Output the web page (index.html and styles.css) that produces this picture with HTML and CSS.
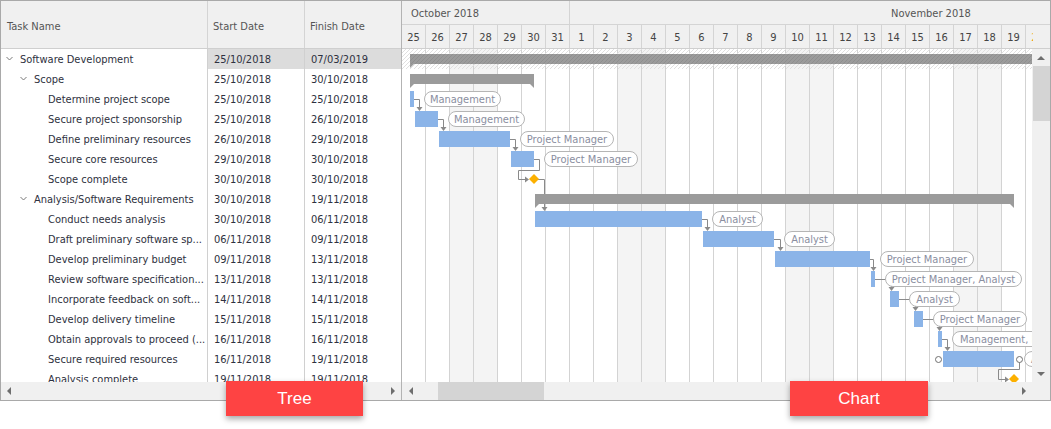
FILE: index.html
```html
<!DOCTYPE html>
<html lang="en">
<head>
  <meta charset="UTF-8">
  <meta name="viewport" content="width=device-width, initial-scale=1.0">
  <title>Gantt</title>
  <link rel="stylesheet" href="styles.css">
</head>
<body>
  <div class="page">
    <div class="gantt">
      <section class="tree">
        <div class="tree-head">
          <div class="th">Task Name</div>
          <div class="th">Start Date</div>
          <div class="th">Finish Date</div>
        </div>
        <div class="tree-body">
          <div class="row focused">
            <div class="cell name lv0"><svg class="chev" width="14" height="6" viewBox="0 0 14 6"><path d="M0.5 1L3.5 4L6.5 1"/></svg>Software Development</div>
            <div class="cell">25/10/2018</div>
            <div class="cell">07/03/2019</div>
          </div>
          <div class="row">
            <div class="cell name lv1"><svg class="chev" width="14" height="6" viewBox="0 0 14 6"><path d="M0.5 1L3.5 4L6.5 1"/></svg>Scope</div>
            <div class="cell">25/10/2018</div>
            <div class="cell">30/10/2018</div>
          </div>
          <div class="row">
            <div class="cell name lv2">Determine project scope</div>
            <div class="cell">25/10/2018</div>
            <div class="cell">25/10/2018</div>
          </div>
          <div class="row">
            <div class="cell name lv2">Secure project sponsorship</div>
            <div class="cell">25/10/2018</div>
            <div class="cell">26/10/2018</div>
          </div>
          <div class="row">
            <div class="cell name lv2">Define preliminary resources</div>
            <div class="cell">26/10/2018</div>
            <div class="cell">29/10/2018</div>
          </div>
          <div class="row">
            <div class="cell name lv2">Secure core resources</div>
            <div class="cell">29/10/2018</div>
            <div class="cell">30/10/2018</div>
          </div>
          <div class="row">
            <div class="cell name lv2">Scope complete</div>
            <div class="cell">30/10/2018</div>
            <div class="cell">30/10/2018</div>
          </div>
          <div class="row">
            <div class="cell name lv1"><svg class="chev" width="14" height="6" viewBox="0 0 14 6"><path d="M0.5 1L3.5 4L6.5 1"/></svg>Analysis/Software Requirements</div>
            <div class="cell">30/10/2018</div>
            <div class="cell">19/11/2018</div>
          </div>
          <div class="row">
            <div class="cell name lv2">Conduct needs analysis</div>
            <div class="cell">30/10/2018</div>
            <div class="cell">06/11/2018</div>
          </div>
          <div class="row">
            <div class="cell name lv2">Draft preliminary software sp...</div>
            <div class="cell">06/11/2018</div>
            <div class="cell">09/11/2018</div>
          </div>
          <div class="row">
            <div class="cell name lv2">Develop preliminary budget</div>
            <div class="cell">09/11/2018</div>
            <div class="cell">13/11/2018</div>
          </div>
          <div class="row">
            <div class="cell name lv2">Review software specification...</div>
            <div class="cell">13/11/2018</div>
            <div class="cell">13/11/2018</div>
          </div>
          <div class="row">
            <div class="cell name lv2">Incorporate feedback on soft...</div>
            <div class="cell">14/11/2018</div>
            <div class="cell">14/11/2018</div>
          </div>
          <div class="row">
            <div class="cell name lv2">Develop delivery timeline</div>
            <div class="cell">15/11/2018</div>
            <div class="cell">15/11/2018</div>
          </div>
          <div class="row">
            <div class="cell name lv2">Obtain approvals to proceed (...</div>
            <div class="cell">16/11/2018</div>
            <div class="cell">16/11/2018</div>
          </div>
          <div class="row">
            <div class="cell name lv2">Secure required resources</div>
            <div class="cell">16/11/2018</div>
            <div class="cell">19/11/2018</div>
          </div>
          <div class="row">
            <div class="cell name lv2">Analysis complete</div>
            <div class="cell">19/11/2018</div>
            <div class="cell">19/11/2018</div>
          </div>
        </div>
        <div class="hscroll tree-scroll">
          <span class="arr left"></span>
          <span class="arr right"></span>
        </div>
      </section>

      <section class="chart">
        <div class="chart-head">
          <div class="months">
            <div class="month oct">October 2018</div>
            <div class="month nov">November 2018</div>
          </div>
          <div class="days">
            <div class="day">25</div><div class="day">26</div><div class="day">27</div><div class="day">28</div>
            <div class="day">29</div><div class="day">30</div><div class="day">31</div>
            <div class="day">1</div><div class="day">2</div><div class="day">3</div><div class="day">4</div>
            <div class="day">5</div><div class="day">6</div><div class="day">7</div><div class="day">8</div>
            <div class="day">9</div><div class="day">10</div><div class="day">11</div><div class="day">12</div>
            <div class="day">13</div><div class="day">14</div><div class="day">15</div><div class="day">16</div>
            <div class="day">17</div><div class="day">18</div><div class="day">19</div><div class="day today">20</div>
          </div>
        </div>

        <div class="chart-main">
          <svg class="canvas" width="630" height="333" viewBox="0 0 630 333">
            <defs>
              <pattern id="grid" width="24" height="20" patternUnits="userSpaceOnUse">
                <rect x="23" width="1" height="20" fill="#d3d3d3"/>
              </pattern>
              <pattern id="hatch" width="4" height="4" patternUnits="userSpaceOnUse">
                <path d="M-1 1L1 -1M0 4L4 0M3 5L5 3" stroke="#e0e0e0"/>
              </pattern>
              <pattern id="hatch-dark" width="4" height="4" patternUnits="userSpaceOnUse">
                <path d="M-1 1L1 -1M0 4L4 0M3 5L5 3" stroke="#8f8f8f"/>
              </pattern>
            </defs>

            <!-- weekends -->
            <g fill="#f4f4f4">
              <rect x="47" width="48" height="333"/>
              <rect x="215" width="48" height="333"/>
              <rect x="383" width="48" height="333"/>
              <rect x="551" width="48" height="333"/>
            </g>
            <rect width="630" height="333" fill="url(#grid)"/>
            <rect width="630" height="20" fill="url(#hatch)"/>

            <!-- dependencies -->
            <g class="links">
              <path d="M12 50.5H17.5V58"/>
              <path d="M36 70.5H41.5V78"/>
              <path d="M108 90.5H113.5V98"/>
              <path d="M132 110.5H137.5V121.5H116.5V130.5H123"/>
              <path d="M136 130.5H142.5V158"/>
              <path d="M300 170.5H305.5V178"/>
              <path d="M372 190.5H378.5V198"/>
              <path d="M468 210.5H471.5V218"/>
              <path d="M473 230.5H489.5V238"/>
              <path d="M497 250.5H513.5V258"/>
              <path d="M521 270.5H537.5V278"/>
              <path d="M540 290.5H545.5V298"/>
              <path d="M617.5 313V320.5H596.5V330.5H603"/>
            </g>
            <g class="heads">
              <polygon points="14.5,58 20.5,58 17.5,62"/>
              <polygon points="38.5,78 44.5,78 41.5,82"/>
              <polygon points="110.5,98 116.5,98 113.5,102"/>
              <polygon points="123,127.5 123,133.5 127,130.5"/>
              <polygon points="139.5,158 145.5,158 142.5,162"/>
              <polygon points="302.5,178 308.5,178 305.5,182"/>
              <polygon points="375.5,198 381.5,198 378.5,202"/>
              <polygon points="468.5,218 474.5,218 471.5,222"/>
              <polygon points="486.5,238 492.5,238 489.5,242"/>
              <polygon points="510.5,258 516.5,258 513.5,262"/>
              <polygon points="534.5,278 540.5,278 537.5,282"/>
              <polygon points="542.5,298 548.5,298 545.5,302"/>
              <polygon points="603,327.5 603,333.5 607,330.5"/>
            </g>

            <!-- summaries -->
            <g fill="#9b9b9b">
              <rect x="8" y="5" width="622" height="10"/>
              <polygon points="8,15 12,15 8,19"/>
              <rect x="8" y="25" width="124" height="10"/>
              <polygon points="8,35 12,35 8,39"/>
              <polygon points="132,35 128,35 132,39"/>
              <rect x="133" y="145" width="479" height="10"/>
              <polygon points="133,155 137,155 133,159"/>
              <polygon points="612,155 608,155 612,159"/>
            </g>
            <rect x="8" y="5" width="622" height="10" fill="url(#hatch-dark)"/>

            <!-- tasks -->
            <g fill="#8bb4e8">
              <rect x="8" y="42" width="4" height="16"/>
              <rect x="13" y="62" width="23" height="16"/>
              <rect x="37" y="82" width="71" height="16"/>
              <rect x="109" y="102" width="23" height="16"/>
              <rect x="133" y="162" width="167" height="16"/>
              <rect x="301" y="182" width="71" height="16"/>
              <rect x="373" y="202" width="95" height="16"/>
              <rect x="469" y="222" width="4" height="16"/>
              <rect x="488" y="242" width="9" height="16"/>
              <rect x="512" y="262" width="9" height="16"/>
              <rect x="536" y="282" width="4" height="16"/>
              <rect x="541" y="302" width="71" height="16"/>
            </g>
            <g fill="#fcb000">
              <polygon points="132,125 137,130 132,135 127,130"/>
              <polygon points="612,325 617,330 612,335 607,330"/>
            </g>
            <g fill="#fff" stroke="#707070">
              <circle cx="536.5" cy="310.5" r="3"/>
              <circle cx="617.5" cy="310.5" r="3"/>
            </g>

            <!-- resources -->
            <g class="pill">
              <rect x="22.5" y="42.5" width="76" height="15" rx="7.5"/>
              <text x="60.5" y="50">Management</text>
            </g>
            <g class="pill">
              <rect x="46.5" y="62.5" width="76" height="15" rx="7.5"/>
              <text x="84.5" y="70">Management</text>
            </g>
            <g class="pill">
              <rect x="118.5" y="82.5" width="93" height="15" rx="7.5"/>
              <text x="165" y="90">Project Manager</text>
            </g>
            <g class="pill">
              <rect x="142.5" y="102.5" width="93" height="15" rx="7.5"/>
              <text x="189" y="110">Project Manager</text>
            </g>
            <g class="pill">
              <rect x="310.5" y="162.5" width="50" height="15" rx="7.5"/>
              <text x="335.5" y="170">Analyst</text>
            </g>
            <g class="pill">
              <rect x="382.5" y="182.5" width="50" height="15" rx="7.5"/>
              <text x="407.5" y="190">Analyst</text>
            </g>
            <g class="pill">
              <rect x="478.5" y="202.5" width="93" height="15" rx="7.5"/>
              <text x="525" y="210">Project Manager</text>
            </g>
            <g class="pill">
              <rect x="483.5" y="222.5" width="136" height="15" rx="7.5"/>
              <text x="551.5" y="230">Project Manager, Analyst</text>
            </g>
            <g class="pill">
              <rect x="507.5" y="242.5" width="50" height="15" rx="7.5"/>
              <text x="532.5" y="250">Analyst</text>
            </g>
            <g class="pill">
              <rect x="531.5" y="262.5" width="93" height="15" rx="7.5"/>
              <text x="578" y="270">Project Manager</text>
            </g>
            <g class="pill left">
              <rect x="550.5" y="282.5" width="170" height="15" rx="7.5"/>
              <text x="558" y="290">Management, Project Manager</text>
            </g>
            <g class="pill left">
              <rect x="622.5" y="302.5" width="60" height="15" rx="7.5"/>
              <text x="629" y="310">Analyst</text>
            </g>
          </svg>
          <div class="vscroll">
            <span class="arr up"></span>
            <span class="thumb"></span>
            <span class="arr down"></span>
          </div>
        </div>

        <div class="chart-foot">
          <div class="hscroll chart-scroll">
            <span class="arr left"></span>
            <span class="thumb"></span>
            <span class="arr right"></span>
          </div>
          <div class="corner"></div>
        </div>
      </section>
    </div>

    <div class="tabs">
      <div class="tab">Tree</div>
      <div class="tab chart-tab">Chart</div>
    </div>
  </div>
</body>
</html>
```

FILE: styles.css
```css
*{margin:0;padding:0;box-sizing:border-box;}

body{
  font-family:"DejaVu Sans Condensed","DejaVu Sans",sans-serif;
  font-size:11px;
  color:#2e3140;
  background:#fff;
}

.page{
  position:relative;
  width:1051px;
  height:429px;
}

.gantt{
  display:flex;
  width:1051px;
  height:401px;
  border:1px solid #a9a9a9;
}

/* tree */
.tree{
  display:flex;
  flex-direction:column;
  width:401px;
  border-right:1px solid #b3b3b3;
}
.tree-head,
.row{
  display:grid;
  grid-template-columns:207px 97px 96px;
}
.tree-head{
  height:48px;
  background:#f0f0f0;
  border-bottom:1px solid #cfcfcf;
}
.th{
  display:flex;
  align-items:center;
  padding:3px 0 0 5px;
  color:#555;
  border-right:1px solid #d4d4d4;
}
.th:first-child{padding-left:6px;}
.th:last-child{border-right:0;}

.tree-body{
  flex:1;
  overflow:hidden;
}
.row{height:20px;}
.cell{
  line-height:21px;
  padding-left:6px;
  white-space:nowrap;
  overflow:hidden;
  text-overflow:ellipsis;
  border-right:1px solid #d0d0d0;
}
.cell:last-child{border-right:0;}
.lv0{padding-left:5px;}
.lv1{padding-left:19px;}
.lv2{padding-left:47px;}
.chev{
  vertical-align:1px;
  fill:none;
  stroke:#7a7a7a;
}
.focused .cell:not(.name){background:#dcdcdc;}

/* scrollbars */
.hscroll{
  display:flex;
  align-items:center;
  height:18px;
  background:#f0f0f0;
}
.tree-scroll{
  justify-content:space-between;
  padding:0 6px;
}
.arr{
  width:0;
  height:0;
  border:4px solid transparent;
}
.arr.left{border-left:0;border-right-color:#6e6e6e;}
.arr.right{border-right:0;border-left-color:#6e6e6e;}
.arr.up{border-top:0;border-bottom-color:#6e6e6e;}
.arr.down{border-bottom:0;border-top-color:#6e6e6e;}

/* chart */
.chart{
  flex:1;
  min-width:0;
  display:flex;
  flex-direction:column;
}
.chart-head{
  height:48px;
  background:#f0f0f0;
  border-bottom:1px solid #cfcfcf;
}
.months{
  display:flex;
  height:24px;
  border-bottom:1px solid #d4d4d4;
}
.month{
  line-height:25px;
  color:#555;
  white-space:nowrap;
}
.oct{
  width:168px;
  padding-left:9px;
  border-right:1px solid #d4d4d4;
}
.nov{padding-left:321px;}
.days{
  display:flex;
  width:631px;
  height:23px;
  overflow:hidden;
}
.day{
  flex:none;
  width:24px;
  line-height:25px;
  text-align:center;
  color:#444;
  border-right:1px solid #d4d4d4;
}
.day.today{color:#f0a020;}

.chart-main{
  display:flex;
  height:333px;
}
.canvas{
  display:block;
  flex:none;
  font-family:"DejaVu Sans Condensed","DejaVu Sans",sans-serif;
  font-size:11px;
}
.links{fill:none;stroke:#8a8a8a;}
.heads{fill:#8a8a8a;}
.pill rect{fill:#fff;stroke:#b5b5b5;}
.pill text{
  fill:#8a8ea0;
  text-anchor:middle;
  dominant-baseline:central;
}
.pill.left text{text-anchor:start;}

.vscroll{
  flex:1;
  display:flex;
  flex-direction:column;
  align-items:center;
  padding:7px 0 6px;
  background:#f0f0f0;
}
.vscroll .thumb{
  align-self:stretch;
  height:55px;
  margin:6px 0 0 1px;
  background:#d4d4d4;
}
.vscroll .down{margin-top:auto;}

.chart-foot{
  display:flex;
  height:18px;
}
.chart-scroll{
  width:630px;
  padding:0 6px 0 7px;
}
.chart-scroll .thumb{
  align-self:stretch;
  width:106px;
  margin-left:25px;
  background:#d4d4d4;
}
.chart-scroll .right{margin-left:auto;}
.corner{
  flex:1;
  background:#f0f0f0;
}

/* overlay tabs */
.tabs{
  position:absolute;
  left:226px;
  top:381px;
  display:flex;
  gap:427px;
}
.tab{
  display:flex;
  align-items:center;
  justify-content:center;
  width:137px;
  height:35px;
  background:#fe4343;
  color:#fff;
  font-family:"Liberation Sans",Arial,sans-serif;
  font-size:17px;
  box-shadow:0 3px 6px rgba(0,0,0,.35);
}
.chart-tab{width:138px;}
```
